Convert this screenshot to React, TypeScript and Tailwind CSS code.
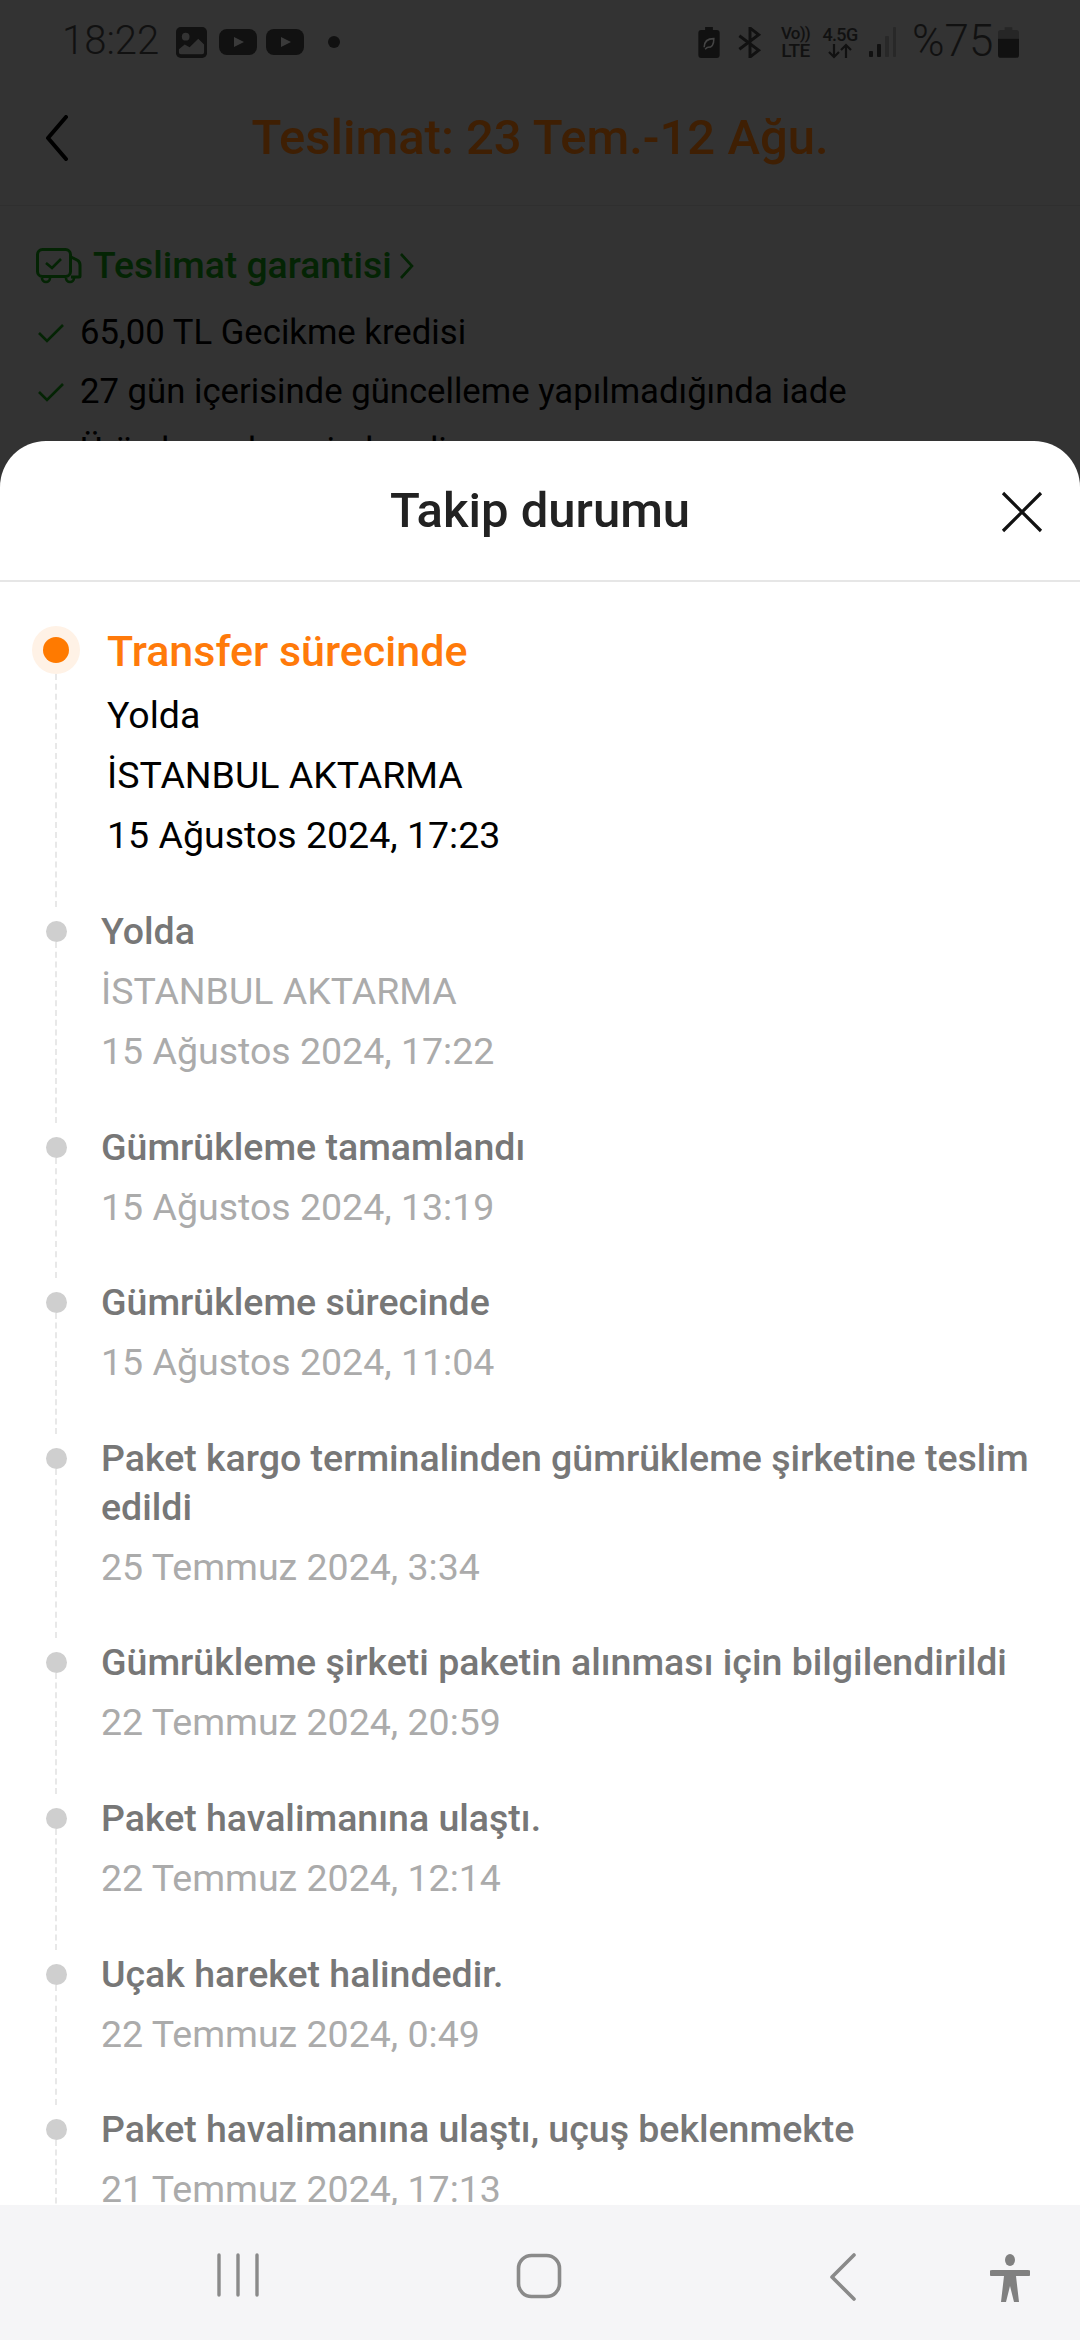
import React from "react";

type Item = { title: string[]; subs: string[] };

const items: Item[] = [
  { title: ["Yolda"], subs: ["İSTANBUL AKTARMA", "15 Ağustos 2024, 17:22"] },
  { title: ["Gümrükleme tamamlandı"], subs: ["15 Ağustos 2024, 13:19"] },
  { title: ["Gümrükleme sürecinde"], subs: ["15 Ağustos 2024, 11:04"] },
  { title: ["Paket kargo terminalinden gümrükleme şirketine teslim", "edildi"], subs: ["25 Temmuz 2024, 3:34"] },
  { title: ["Gümrükleme şirketi paketin alınması için bilgilendirildi"], subs: ["22 Temmuz 2024, 20:59"] },
  { title: ["Paket havalimanına ulaştı."], subs: ["22 Temmuz 2024, 12:14"] },
  { title: ["Uçak hareket halindedir."], subs: ["22 Temmuz 2024, 0:49"] },
  { title: ["Paket havalimanına ulaştı, uçuş beklenmekte"], subs: ["21 Temmuz 2024, 17:13"] },
];

function Check() {
  return (
    <svg width="30" height="22" viewBox="0 0 30 22" fill="none" className="shrink-0">
      <path d="M3 11l8 8L27 3" stroke="#042404" strokeWidth="2.6" />
    </svg>
  );
}

function StatusBar() {
  return (
    <div className="h-[84px] shrink-0 flex items-center justify-between pl-[62px] pr-[61px] text-[#111]">
      <div className="flex items-center">
        <span className="text-[40px] font-light leading-none w-[114px] -translate-y-[1px]">18:22</span>
        <svg width="31" height="31" viewBox="0 0 32 32" className="mr-[12px]">
          <rect width="32" height="32" rx="5" fill="#111" />
          <circle cx="10" cy="10" r="4" fill="#333" />
          <path d="M3 26v-3l6-5 5 3 9-9 6 6v8a2 2 0 01-2 2H5a2 2 0 01-2-2z" fill="#333" />
        </svg>
        <svg width="38" height="26" viewBox="0 0 38 26" className="mr-[9px]">
          <rect width="38" height="26" rx="8" fill="#111" />
          <path d="M15 8l10 5-10 5z" fill="#3a3a3a" />
        </svg>
        <svg width="38" height="26" viewBox="0 0 38 26" className="mr-[24px]">
          <rect width="38" height="26" rx="8" fill="#111" />
          <path d="M15 8l10 5-10 5z" fill="#3a3a3a" />
        </svg>
        <span className="w-[12px] h-[12px] rounded-full bg-[#111]" />
      </div>
      <div className="flex items-center">
        <svg width="22" height="31" viewBox="0 0 22 32" className="mr-[17px]">
          <path d="M7 0h8v3h4a3 3 0 013 3v23a3 3 0 01-3 3H3a3 3 0 01-3-3V6a3 3 0 013-3h4z" fill="#111" />
          <path d="M6 21c0-6 4-9 10-9 0 6-2 9-6 9-1 0-2 1-3 2" stroke="#444" strokeWidth="1.6" fill="none" />
        </svg>
        <svg width="26" height="31" viewBox="0 0 26 32" fill="none" className="mr-[17px]">
          <path d="M2 9l20 15-9 7V1l9 7L2 23" stroke="#111" strokeWidth="3" />
        </svg>
        <div className="flex flex-col items-center w-[31px] mr-[11px] font-medium leading-[17px]">
          <span className="text-[17px] tracking-[-0.8px]">Vo))</span>
          <span className="text-[19px] tracking-[-0.6px]">LTE</span>
        </div>
        <div className="flex flex-col items-center w-[36px] mr-[11px]">
          <span className="text-[18px] font-medium leading-[17px] tracking-[-0.7px]">4.5G</span>
          <svg width="26" height="16" viewBox="0 0 26 16" fill="none">
            <path d="M7 1v13M2 9l5 5 5-5M19 15V2M14 7l5-5 5 5" stroke="#111" strokeWidth="2.2" />
          </svg>
        </div>
        <svg width="27" height="30" viewBox="0 0 27 30" className="mr-[16px]">
          <rect x="0" y="24" width="4" height="6" rx="1" fill="#111" />
          <rect x="8" y="17" width="4" height="13" rx="1" fill="#111" />
          <rect x="16" y="9" width="4" height="21" rx="1" fill="#282828" />
          <rect x="24" y="0" width="3" height="30" rx="1" fill="#282828" />
        </svg>
        <span className="text-[44px] font-light leading-none w-[86px] -translate-y-[1px]">%75</span>
        <svg width="21" height="31" viewBox="0 0 22 32">
          <path d="M7 0h8v3h4a3 3 0 013 3v6H0V6a3 3 0 013-3h4z" fill="#262626" />
          <path d="M0 12h22v17a3 3 0 01-3 3H3a3 3 0 01-3-3z" fill="#111" />
        </svg>
      </div>
    </div>
  );
}

function Backdrop() {
  return (
    <div className="h-[441px] shrink-0 overflow-hidden">
      <StatusBar />
      <div className="h-[122px] relative flex items-center justify-center pb-[14px] border-b border-[#2f2f2f]">
        <svg width="24" height="46" viewBox="0 0 24 46" fill="none" className="absolute left-[45px] top-[31px]">
          <path d="M21 2L3 23l18 21" stroke="#000" strokeWidth="4" strokeLinecap="round" strokeLinejoin="round" />
        </svg>
        <span className="text-[49px] font-medium text-[#3f1f03] leading-none">Teslimat: 23 Tem.-12 Ağu.</span>
      </div>
      <div className="pl-[36px] pt-[38px]">
        <div className="flex items-center h-[44px]">
          <svg width="46" height="36" viewBox="0 0 46 36" fill="none" className="mr-[11px] shrink-0">
            <rect x="1.500" y="1.500" width="33" height="27" rx="5" stroke="#042404" strokeWidth="3" />
            <path d="M10 15l6 5 9-9" stroke="#042404" strokeWidth="2.6" />
            <path d="M35 9l6 3c2 1 3 3 3 5v11a1 1 0 01-1 1h-8" stroke="#042404" strokeWidth="3" />
            <path d="M6 30a4 4 0 008 0M30 30a4 4 0 008 0" stroke="#042404" strokeWidth="2.6" />
          </svg>
          <span className="text-[37.3px] font-medium text-[#042404] leading-none">Teslimat garantisi</span>
          <svg width="16" height="28" viewBox="0 0 16 28" fill="none" className="ml-[7px]">
            <path d="M2 2l11 12L2 26" stroke="#042404" strokeWidth="2.6" />
          </svg>
        </div>
        <div className="flex items-center h-[59px] mt-[15px] gap-[14px] text-[34.7px] text-black">
          <Check />
          <span>65,00 TL Gecikme kredisi</span>
        </div>
        <div className="flex items-center h-[59px] gap-[14px] text-[34.7px] text-black">
          <Check />
          <span>27 gün içerisinde güncelleme yapılmadığında iade</span>
        </div>
        <div className="flex items-center h-[59px] gap-[14px] text-[34.7px] text-black">
          <Check />
          <span>Ürün hasarlıysa iade edin</span>
        </div>
      </div>
    </div>
  );
}

function Row({ item }: { item: Item }) {
  return (
    <div className="flex">
      <div className="w-[112px] -mr-[11px] shrink-0 flex flex-col items-center">
        <span className="w-[21px] h-[21px] rounded-full bg-[#cfcfcf] mt-[14px] shrink-0" />
        <span className="flex-1 border-l-2 border-dashed border-[#e8e8e8]" />
      </div>
      <div className="pb-[46.6px]">
        {item.title.map((t) => (
          <div key={t} className="text-[37.5px] font-medium leading-[49px] text-[#777777]">{t}</div>
        ))}
        {item.subs.map((s) => (
          <div key={s} className="text-[37.5px] leading-[49px] mt-[11px] text-[#ababab]">{s}</div>
        ))}
      </div>
    </div>
  );
}

function Sheet() {
  return (
    <div className="h-[1899px] shrink-0 bg-white rounded-t-[46px] overflow-hidden flex flex-col">
      <div className="h-[141px] shrink-0 relative flex items-center justify-center border-b-2 border-[#e6e6e6]">
        <span className="text-[49px] font-medium text-[#222222] leading-none">Takip durumu</span>
        <svg width="42" height="42" viewBox="0 0 42 42" fill="none" className="absolute right-[37px] top-[50px]">
          <path d="M2 2l38 38M40 2L2 40" stroke="#111" strokeWidth="3.2" />
        </svg>
      </div>
      <div className="flex-1 overflow-hidden pt-[47px]">
        <div className="flex">
          <div className="w-[112px] -mr-[5px] shrink-0 flex flex-col items-center">
            <span className="w-[48px] h-[48px] rounded-full bg-[#fff2e6] flex items-center justify-center shrink-0 -mt-[3px]">
              <span className="w-[26px] h-[26px] rounded-full bg-[#ff7a00]" />
            </span>
            <span className="flex-1 border-l-2 border-dashed border-[#e8e8e8]" />
          </div>
          <div className="pb-[47px]">
            <div className="text-[43px] font-medium leading-[46px] -translate-y-[1px] text-[#ff7a0a]">Transfer sürecinde</div>
            <div className="text-[37.5px] leading-[49px] mt-[16px] text-black">Yolda</div>
            <div className="text-[37.5px] leading-[49px] mt-[11px] text-black">İSTANBUL AKTARMA</div>
            <div className="text-[37.5px] leading-[49px] mt-[11px] text-black">15 Ağustos 2024, 17:23</div>
          </div>
        </div>
        {items.map((it, i) => (
          <Row key={i} item={it} />
        ))}
      </div>
      <div className="h-[135px] shrink-0 bg-[#f5f5f7] relative flex items-center">
        <svg width="44" height="44" viewBox="0 0 44 44" fill="none" className="absolute left-[216px] top-[48px]">
          <path d="M3 2v40M22 2v40M41 2v40" stroke="#8a8a8a" strokeWidth="3.4" strokeLinecap="round" />
        </svg>
        <svg width="46" height="46" viewBox="0 0 46 46" fill="none" className="absolute left-[516px] top-[48px]">
          <rect x="2.500" y="2.500" width="41" height="41" rx="13" stroke="#8a8a8a" strokeWidth="3.6" />
        </svg>
        <svg width="28" height="48" viewBox="0 0 28 48" fill="none" className="absolute left-[829px] top-[48px]">
          <path d="M25 2L3 24l22 22" stroke="#8a8a8a" strokeWidth="3.6" strokeLinecap="round" strokeLinejoin="round" />
        </svg>
        <svg width="40" height="50" viewBox="0 0 40 50" className="absolute left-[990px] top-[49px]">
          <ellipse cx="20" cy="6" rx="5" ry="6" fill="#808080" />
          <path d="M2 16h36a1.500 1.500 0 010 6H26l3 26h-5l-4-16-4 16h-5l3-26H2a1.500 1.500 0 010-6z" fill="#808080" />
        </svg>
      </div>
    </div>
  );
}

export default function App() {
  return (
    <div className="w-[1080px] h-[2340px] overflow-hidden flex flex-col bg-[#333333] [font-family:Roboto,sans-serif]">
      <Backdrop />
      <Sheet />
    </div>
  );
}
